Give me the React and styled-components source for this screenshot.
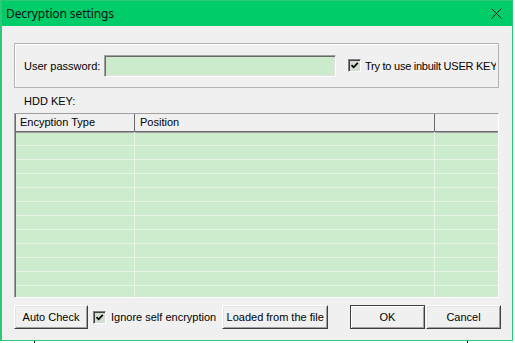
import React from "react";
import styled, { createGlobalStyle } from "styled-components";

const Global = createGlobalStyle`
  html, body { margin: 0; padding: 0; background: #ffffff; overflow: hidden; }
  body { font-family: "Liberation Sans", Arial, sans-serif; font-size: 11px; color: #000; }
  * { box-sizing: border-box; }
`;

const Window = styled.div`
  width: 513px;
  height: 341px;
  border: 1px solid #2fc878;
  border-left-width: 2px;
  background: #f0f0f0;
  display: flex;
  flex-direction: column;
`;

const TitleBar = styled.div`
  height: 25px;
  background: #00cc6a;
  display: flex;
  align-items: center;
  justify-content: space-between;
  padding: 0 10px 0 4px;
  flex-shrink: 0;
`;

const Title = styled.div`
  font-family: "Noto Sans", "Open Sans", sans-serif;
  font-size: 12px;
  color: #111;
  letter-spacing: -0.1px;
`;

const Client = styled.div`
  flex: 1;
  display: flex;
  flex-direction: column;
  padding: 17px 13px 0 12px;
`;

const GroupBox = styled.div`
  height: 45px;
  border: 1px solid #b4b4b4;
  box-shadow: inset 1px 1px 0 #ffffff;
  display: flex;
  align-items: center;
  padding: 0 2px 0 9px;
`;

const FieldLabel = styled.span`
  width: 80px;
  flex-shrink: 0;
  white-space: nowrap;
`;

const Input = styled.div`
  width: 232px;
  height: 22px;
  flex-shrink: 0;
  background: #cbebcb;
  border-top: 1px solid #a0a0a0;
  border-left: 1px solid #a0a0a0;
  border-right: 1px solid #ffffff;
  border-bottom: 1px solid #ffffff;
  box-shadow: inset 1px 1px 0 #696969, inset -1px -1px 0 #e3e3e3;
`;

const CheckRow = styled.label`
  display: flex;
  align-items: center;
  gap: ${(p) => p.$gap || 5}px;
  white-space: nowrap;
  overflow: hidden;
  margin-left: ${(p) => p.$offset || 0}px;
  flex: ${(p) => (p.$grow ? 1 : "none")};
  letter-spacing: ${(p) => p.$tight ? "-0.25px" : "normal"};
`;

const Box = styled.span`
  width: 13px;
  height: 13px;
  flex-shrink: 0;
  background: #d3dcd3;
  border-top: 1px solid #808080;
  border-left: 1px solid #808080;
  border-right: 1px solid #ffffff;
  border-bottom: 1px solid #ffffff;
  box-shadow: inset 1px 1px 0 #404040;
  display: flex;
  align-items: center;
  justify-content: center;
`;

const Check = () => (
  <Box>
    <svg width="9" height="9" viewBox="0 0 9 9">
      <path d="M1.5 4.2 L3.6 6.3 L7.8 1.8" fill="none" stroke="#000" strokeWidth="1.7" />
    </svg>
  </Box>
);

const SectionLabel = styled.div`
  line-height: 13px;
  padding: 7px 0 5px 10px;
`;

const List = styled.div`
  height: 185px;
  border-top: 1px solid #a0a0a0;
  border-left: 1px solid #a0a0a0;
  border-right: 1px solid #ffffff;
  border-bottom: 1px solid #ffffff;
  background: #cdebcd;
  display: flex;
  flex-direction: column;
  overflow: hidden;
  position: relative;
  &::before {
    content: "";
    position: absolute;
    left: 0;
    top: 0;
    bottom: 0;
    width: 1px;
    background: #696969;
  }
`;

const cols = "120px 300px 1fr";

const HeaderRow = styled.div`
  display: grid;
  grid-template-columns: ${cols};
  height: 18px;
  flex-shrink: 0;
  background: #f0f0f0;
  border-bottom: 1px solid #6b6b6b;
  box-shadow: 0 1px 0 #a0a0a0;
`;

const HeaderCell = styled.div`
  padding-left: 5px;
  line-height: 17px;
  border-right: ${(p) => (p.$last ? "none" : "1px solid #6b6b6b")};
  white-space: nowrap;
`;

const Row = styled.div`
  display: grid;
  grid-template-columns: ${cols};
  height: 14px;
  flex-shrink: 0;
  border-bottom: 1px solid #e6f5e6;
`;

const Cell = styled.div`
  border-right: ${(p) => (p.$last ? "none" : "1px solid #e6f5e6")};
`;

const Footer = styled.div`
  display: flex;
  align-items: center;
  height: 24px;
  margin-top: 7px;
  margin-right: -2px;
`;

const Button = styled.button`
  width: ${(p) => p.$w}px;
  height: 24px;
  flex-shrink: 0;
  padding: 0;
  font-family: "Liberation Sans", Arial, sans-serif;
  font-size: 11px;
  color: #000;
  background: #f0f0f0;
  border-top: 1px solid ${(p) => (p.$default ? "#404040" : "#ffffff")};
  border-left: 1px solid ${(p) => (p.$default ? "#404040" : "#ffffff")};
  border-right: 1px solid #404040;
  border-bottom: 1px solid #404040;
  box-shadow: ${(p) =>
    p.$default
      ? "inset 1px 1px 0 #ffffff, inset -1px -1px 0 #a0a0a0"
      : "inset 1px 1px 0 #e3e3e3, inset -1px -1px 0 #a0a0a0"};
  margin-left: ${(p) => p.$ml || 0}px;
`;

const Spacer = styled.div`
  flex: 1;
`;

const Ticks = styled.div`
  height: 2px;
  display: flex;
  justify-content: space-between;
  padding: 0 47px 0 34px;
`;

const Tick = styled.div`
  width: 1px;
  height: 2px;
  background: #000;
`;

const CloseIcon = () => (
  <svg width="11" height="11" viewBox="0 0 11 11">
    <path d="M0.5 0.5 L10.5 10.5 M10.5 0.5 L0.5 10.5" stroke="#1a1a1a" strokeWidth="1" fill="none" />
  </svg>
);

export default function App() {
  const rows = Array.from({ length: 13 });
  return (
    <>
      <Global />
      <Window>
        <TitleBar>
          <Title>Decryption settings</Title>
          <CloseIcon />
        </TitleBar>
        <Client>
          <GroupBox>
            <FieldLabel>User password:</FieldLabel>
            <Input />
            <CheckRow $offset={12} $gap={4} $grow $tight>
              <Check />
              <span>Try to use inbuilt USER KEY</span>
            </CheckRow>
          </GroupBox>
          <SectionLabel>HDD KEY:</SectionLabel>
          <List>
            <HeaderRow>
              <HeaderCell>Encyption Type</HeaderCell>
              <HeaderCell>Position</HeaderCell>
              <HeaderCell $last />
            </HeaderRow>
            {rows.map((_, i) => (
              <Row key={i}>
                <Cell />
                <Cell />
                <Cell $last />
              </Row>
            ))}
          </List>
          <Footer>
            <Button $w={74}>Auto Check</Button>
            <CheckRow $offset={5}>
              <Check />
              <span>Ignore self encryption</span>
            </CheckRow>
            <Button $w={106} $ml={6}>Loaded from the file</Button>
            <Spacer />
            <Button $w={75} $default>OK</Button>
            <Button $w={75} $ml={1}>Cancel</Button>
          </Footer>
        </Client>
      </Window>
      <Ticks>
        <Tick />
        <Tick />
      </Ticks>
    </>
  );
}
